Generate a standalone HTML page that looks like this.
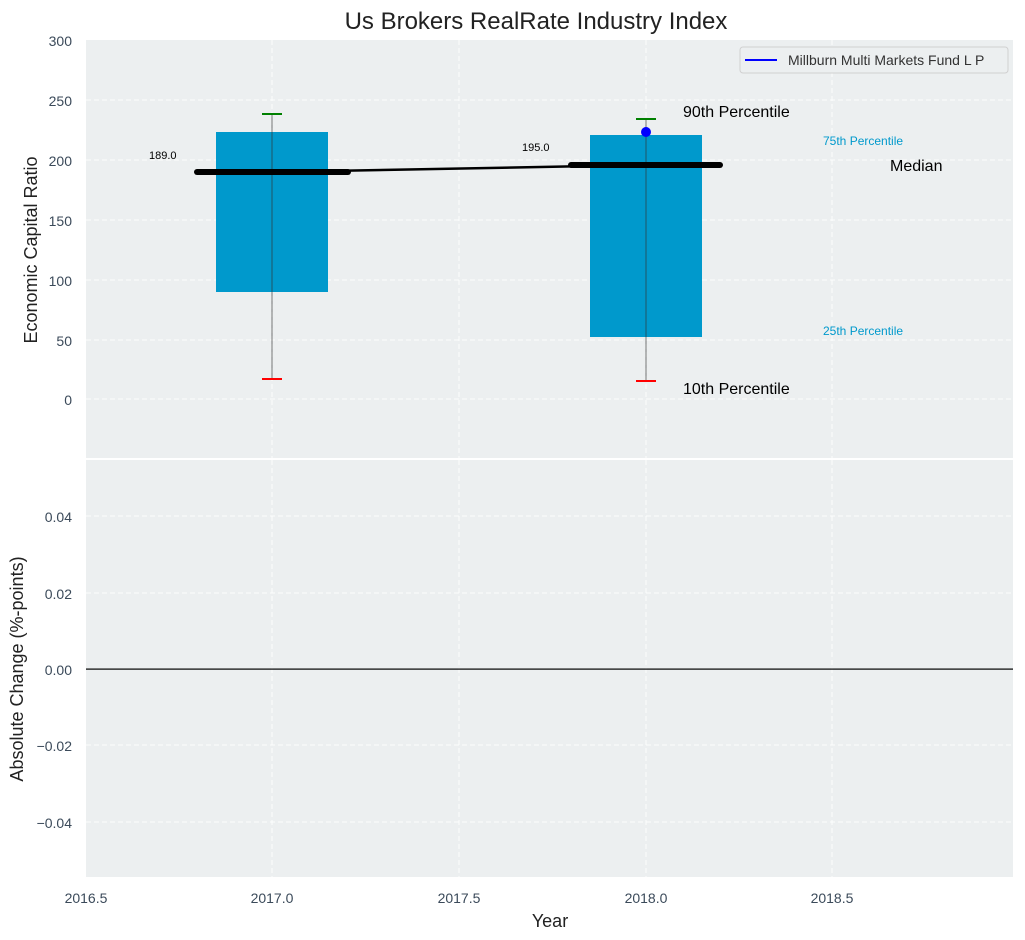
<!DOCTYPE html><html><head><style>body{margin:0;background:#fff}svg{display:block;font-family:"Liberation Sans",sans-serif}</style></head><body>
<svg width="1025" height="940" xmlns="http://www.w3.org/2000/svg">
<rect x="86" y="40" width="927" height="418" fill="#eceff0"/>
<rect x="86" y="460" width="927" height="417" fill="#eceff0"/>
<g stroke="#fff" stroke-dasharray="5,3" stroke-width="1" stroke-opacity="0.8">
<line x1="86" x2="1013" y1="100" y2="100"/><line x1="86" x2="1013" y1="160" y2="160"/><line x1="86" x2="1013" y1="220" y2="220"/><line x1="86" x2="1013" y1="280" y2="280"/><line x1="86" x2="1013" y1="340" y2="340"/><line x1="86" x2="1013" y1="399" y2="399"/>
<line x1="272" x2="272" y1="40" y2="458"/><line x1="459" x2="459" y1="40" y2="458"/><line x1="646" x2="646" y1="40" y2="458"/><line x1="832" x2="832" y1="40" y2="458"/>
<line x1="86" x2="1013" y1="516" y2="516"/><line x1="86" x2="1013" y1="593" y2="593"/><line x1="86" x2="1013" y1="745" y2="745"/><line x1="86" x2="1013" y1="822" y2="822"/>
<line x1="272" x2="272" y1="460" y2="877"/><line x1="459" x2="459" y1="460" y2="877"/><line x1="646" x2="646" y1="460" y2="877"/><line x1="832" x2="832" y1="460" y2="877"/>
</g>
<rect x="216" y="132" width="112" height="160" fill="#0099cc"/>
<rect x="590" y="135" width="112" height="202" fill="#0099cc"/>
<g stroke="#333" stroke-opacity="0.55" stroke-width="1.2"><line x1="272" x2="272" y1="114" y2="379"/><line x1="646" x2="646" y1="119" y2="381"/></g>
<g stroke-width="2"><line x1="262" x2="282" y1="114" y2="114" stroke="green"/><line x1="636" x2="656" y1="119" y2="119" stroke="green"/><line x1="262" x2="282" y1="379" y2="379" stroke="red"/><line x1="636" x2="656" y1="381" y2="381" stroke="red"/></g>
<line x1="272" y1="172" x2="646" y2="165" stroke="#000" stroke-width="2.5"/>
<g stroke="#000" stroke-width="6" stroke-linecap="round"><line x1="197" x2="348" y1="172" y2="172"/><line x1="571" x2="720" y1="165" y2="165"/></g>
<circle cx="646" cy="132" r="5" fill="#0000ff"/>
<rect x="86" y="668.5" width="927" height="1.2" fill="#000"/>
<g font-size="11" fill="#000"><text x="149" y="159">189.0</text><text x="522" y="151">195.0</text></g>
<g font-size="16" fill="#000"><text x="683" y="117">90th Percentile</text><text x="683" y="394">10th Percentile</text><text x="890" y="171">Median</text></g>
<g font-size="12" fill="#0099cc"><text x="823" y="145">75th Percentile</text><text x="823" y="335">25th Percentile</text></g>
<rect x="740" y="47" width="268" height="26" rx="3" fill="#eceff0" stroke="#d0d0d0"/>
<line x1="745" x2="777" y1="60" y2="60" stroke="#0000ff" stroke-width="2"/>
<text x="788" y="65" font-size="14" fill="#333">Millburn Multi Markets Fund L P</text>
<g font-size="14" fill="#3b4a5a" text-anchor="end"><text x="72" y="46">300</text><text x="72" y="106">250</text><text x="72" y="166">200</text><text x="72" y="226">150</text><text x="72" y="286">100</text><text x="72" y="346">50</text><text x="72" y="405">0</text>
<text x="72" y="522">0.04</text><text x="72" y="599">0.02</text><text x="72" y="675">0.00</text><text x="72" y="751">−0.02</text><text x="72" y="828">−0.04</text></g>
<g font-size="14" fill="#3b4a5a" text-anchor="middle"><text x="86" y="903">2016.5</text><text x="272" y="903">2017.0</text><text x="459" y="903">2017.5</text><text x="646" y="903">2018.0</text><text x="832" y="903">2018.5</text></g>
<text x="550" y="927" font-size="18" fill="#222" text-anchor="middle">Year</text>
<text x="536" y="29" font-size="24" fill="#222" text-anchor="middle">Us Brokers RealRate Industry Index</text>
<text transform="translate(37,250) rotate(-90)" font-size="18" fill="#222" text-anchor="middle">Economic Capital Ratio</text>
<text transform="translate(23,669) rotate(-90)" font-size="18" fill="#222" text-anchor="middle">Absolute Change (%-points)</text>
</svg></body></html>
